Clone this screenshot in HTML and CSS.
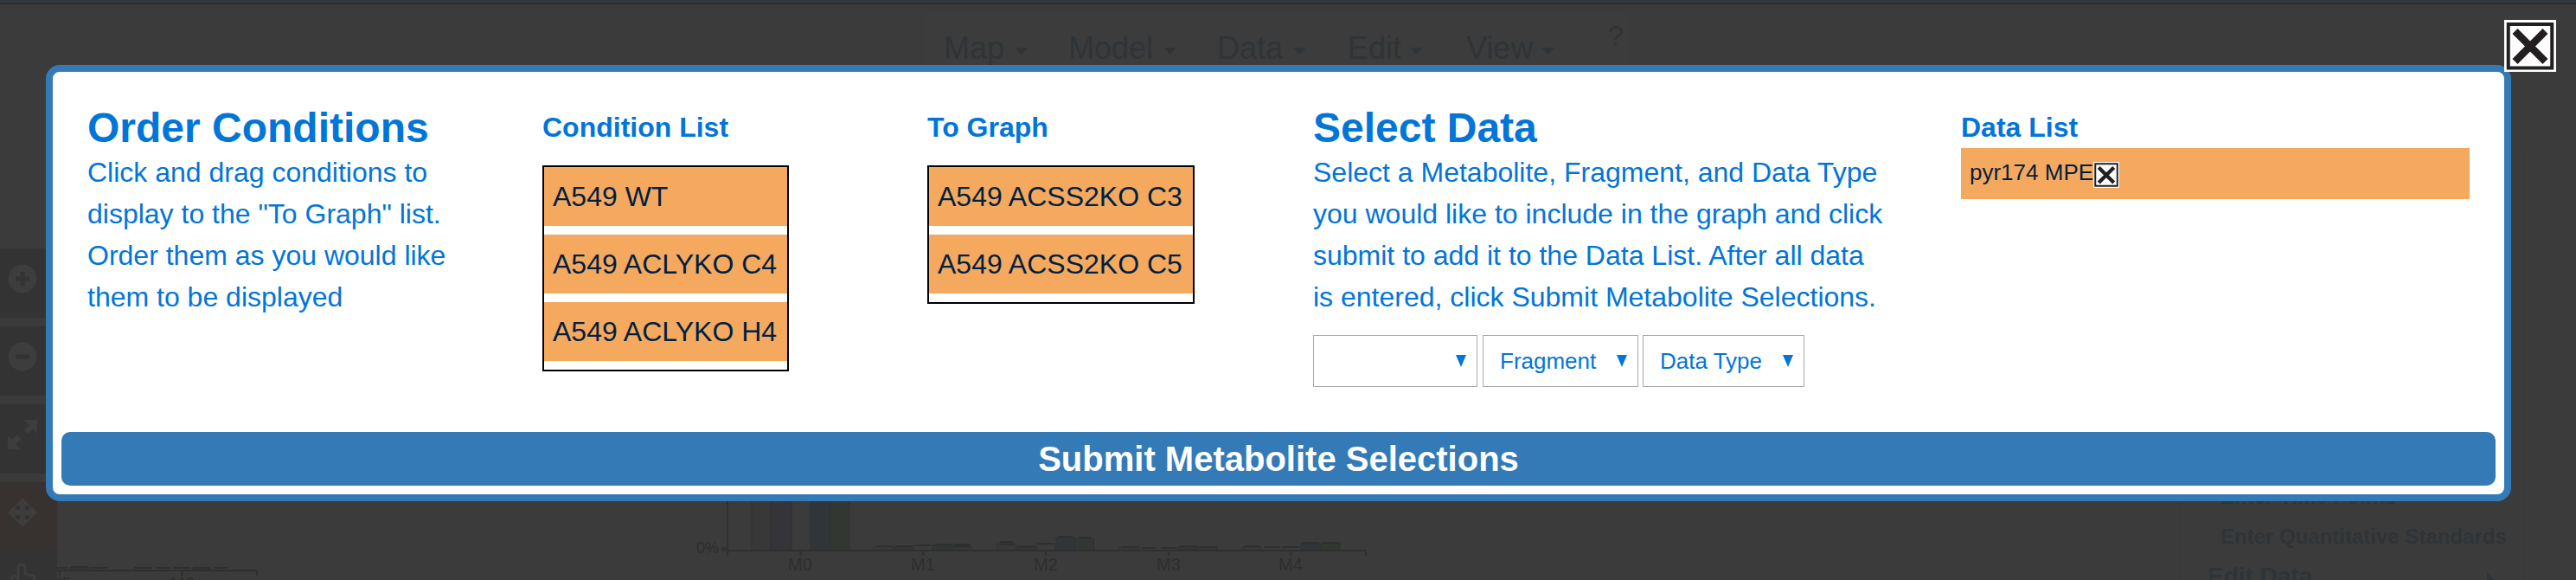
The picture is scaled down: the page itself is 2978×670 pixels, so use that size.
FILE: index.html
```
<!DOCTYPE html>
<html lang="en">
<head>
<meta charset="utf-8">
<title>Metabolite Selections</title>
<link rel="stylesheet" href="styles.css">
</head>
<body>
<div class="page">
  <svg class="backdrop" width="2978" height="670" viewBox="0 0 2978 670">
    <rect class="topbar" width="2978" height="4"/>
    <rect class="topline" y="4" width="2978" height="1"/>
    <rect class="nav" x="1070" y="16" width="814" height="70"/>
    <g class="menu">
      <text x="1091" y="68">Map</text><path d="M1173 55h15l-7.500 8z"/>
      <text x="1235" y="68">Model</text><path d="M1345 55h15l-7.500 8z"/>
      <text x="1407" y="68">Data</text><path d="M1495 55h15l-7.500 8z"/>
      <text x="1558" y="68">Edit</text><path d="M1630 55h15l-7.500 8z"/>
      <text x="1695" y="68">View</text><path d="M1782 55h15l-7.500 8z"/>
      <text class="help" x="1859" y="52">?</text>
    </g>
    <g class="tools">
      <rect y="287" width="66" height="80"/>
      <rect y="377" width="66" height="80"/>
      <rect y="467" width="66" height="80"/>
      <rect class="active" y="557" width="66" height="77"/>
      <rect y="634" width="66" height="36"/>
    </g>
    <g class="glyphs">
      <circle cx="26" cy="322" r="16.500"/><circle cx="26" cy="412" r="16.500"/>
      <path d="M27 485h16v16l-5-5-6 5.500-4.500-4.500 6-6zM9 519v-16l4.500 5 6-6 5 5-6 6 5 6z"/>
      <path d="M26 575l17 17-17 17-17-17z"/>
      <path class="hand" d="M21 672v-16q0-4 4-4t4 4v7l9 2q2 1 2 4l-1 4M21 668q-5-5-8 0l3 5"/>
    </g>
    <path class="glyph-cuts" d="M23.500 314h5v5.500h5.500v5h-5.500v5.500h-5v-5.500H18v-5h5.500zM18 409.500h16v5H18z"/>
    <path class="move-cuts" d="M18 584h5v5h-5zM29 584h5v5h-5zM18 595h5v5h-5zM29 595h5v5h-5z"/>
    <g class="chart">
      <g class="bars">
        <rect class="grey" x="869" y="570" width="22" height="66"/><rect class="navy" x="891" y="570" width="24" height="66"/>
        <rect class="blue" x="937" y="570" width="23" height="66"/><rect class="green" x="960" y="570" width="22" height="66"/>
        <rect class="grey" x="1010" y="631" width="23" height="5"/><rect class="navy" x="1033" y="631" width="23" height="5"/><rect class="blank" x="1056" y="630" width="22" height="6"/>
        <rect class="blue" x="1079" y="629" width="22" height="7"/><rect class="green" x="1101" y="630" width="22" height="6"/>
        <rect class="grey" x="1153" y="628" width="22" height="8"/><rect class="navy" x="1175" y="632" width="23" height="4"/><rect class="blank" x="1198" y="628" width="22" height="8"/>
        <rect class="blue" x="1221" y="621" width="22" height="15"/><rect class="green" x="1243" y="622" width="22" height="14"/>
        <rect class="grey" x="1294" y="632" width="23" height="4"/><rect class="blue" x="1362" y="631" width="23" height="5"/><rect class="green" x="1385" y="632" width="22" height="4"/>
        <rect class="grey" x="1436" y="632" width="22" height="4"/><rect class="blue" x="1504" y="628" width="23" height="8"/><rect class="green" x="1527" y="628" width="22" height="8"/>
      </g>
      <path class="axis" d="M841 570v72M834 633.500h7M834 636h745v6M925.500 636v6M1067.500 636v6M1209 636v6M1351 636v6M1492.500 636v6"/>
      <path class="caps" d="M1014 631h16M1037 631h16M1058 630h18M1080 629h19M1103 629h18M1103 631h18M1156 626h16M1156 629h16M1177 631h19M1200 628h18M1223 620h17M1246 621h16M1297 632h18M1320 633h16M1342 633h18M1364 631h19M1387 632h19M1438 631h18M1461 632h19M1482 632h20M1506 627h19M1529 627h19"/>
      <text x="805" y="639" class="pct">0%</text>
      <text x="911" y="659">M0</text><text x="1053" y="659">M1</text><text x="1195" y="659">M2</text><text x="1337" y="659">M3</text><text x="1478" y="659">M4</text>
      <rect class="blue" x="80" y="655" width="24" height="4"/><rect class="green" x="222" y="656" width="23" height="3"/>
      <path class="axis" d="M66 659h231v6M69 659v6M210.500 659v6"/>
      <path class="caps" d="M66 656h12M82 655h20M105 656h20M155 656h21M180 656h16M200 656h20M223 656h20M248 656h16"/>
      <text x="66" y="681">I5</text><text x="197" y="681">M6</text>
    </g>
    <path class="panel-line" d="M2519.500 570v100M2917.500 174v496M2917 288.500h61"/>
    <g class="side">
      <text x="2567" y="582">Enter Time Points</text>
      <text x="2567" y="628">Enter Quantitative Standards</text>
      <text class="edit" x="2552" y="675">Edit Data</text>
      <path d="M2875 661l9 9h-9z"/>
    </g>
  </svg>

  <div class="modal">
    <div class="content">
      <section class="order">
        <h1>Order Conditions</h1>
        <p>Click and drag conditions to<br>display to the "To Graph" list.<br>Order them as you would like<br>them to be displayed</p>
      </section>
      <section class="conditions">
        <h2>Condition List</h2>
        <ul class="list">
          <li>A549 WT</li>
          <li>A549 ACLYKO C4</li>
          <li>A549 ACLYKO H4</li>
        </ul>
      </section>
      <section class="graph">
        <h2>To Graph</h2>
        <ul class="list wide">
          <li>A549 ACSS2KO C3</li>
          <li>A549 ACSS2KO C5</li>
        </ul>
      </section>
      <section class="select">
        <h1>Select Data</h1>
        <p>Select a Metabolite, Fragment, and Data Type<br>you would like to include in the graph and click<br>submit to add it to the Data List. After all data<br>is entered, click Submit Metabolite Selections.</p>
        <div class="dropdowns">
          <div class="dropdown metabolite"><span></span><i class="arrow"></i></div>
          <div class="dropdown fragment"><span>Fragment</span><i class="arrow"></i></div>
          <div class="dropdown datatype"><span>Data Type</span><i class="arrow"></i></div>
        </div>
      </section>
      <section class="data">
        <h2>Data List</h2>
        <div class="entry"><span>pyr174 MPE</span>
          <svg width="30" height="30" viewBox="0 0 60 60"><rect width="60" height="60" fill="#fff"/><rect x="4.500" y="4.500" width="51" height="51" fill="none" stroke="#231f20" stroke-width="4"/><path d="M12.500 13l35 35M47.500 13l-35 35" stroke="#231f20" stroke-width="8.500"/></svg>
        </div>
      </section>
    </div>
    <button class="submit">Submit Metabolite Selections</button>
    <svg class="close" width="60" height="60" viewBox="0 0 60 60"><rect width="60" height="60" fill="#fff"/><rect x="4.750" y="5" width="50.500" height="50.500" fill="none" stroke="#231f20" stroke-width="4"/><path d="M12.500 13l35 35M47.500 13l-35 35" stroke="#231f20" stroke-width="8.500"/></svg>
  </div>
</div>
</body>
</html>
```
FILE: styles.css
```
* { box-sizing: border-box; }
body { margin: 0; font-family: "Liberation Sans", Arial, sans-serif; }
.page { position: relative; width: 2978px; height: 670px; overflow: hidden; background: #3b3b3b; padding: 75px 75px 0 53px; }

/* dimmed page behind the dialog */
.backdrop { position: absolute; left: 0; top: 0; }
.topbar { fill: #30363a; }
.topline { fill: #262626; }
.nav { fill: #3c3c3c; }
.menu { fill: #2f3438; font-size: 36px; }
.help { font-size: 32px; }
.tools rect { fill: #323332; }
.tools .active { fill: #373130; }
.glyphs { fill: #3d3d3d; }
.glyphs .hand { fill: none; stroke: #3d3d3d; stroke-width: 3; }
.glyph-cuts { fill: #323332; }
.move-cuts { fill: #373130; }
.chart { fill: #2e2e2e; font-size: 20px; }
.pct { font-size: 18px; }
.bars rect { stroke: #313131; stroke-width: 1; }
.chart .blank { fill: #3b3b3b; }
.chart .grey { fill: #383838; }
.chart .navy { fill: #343439; }
.chart .blue { fill: #303539; }
.chart .green { fill: #323831; }
.chart .axis { fill: none; stroke: #2f2f2f; stroke-width: 2; }
.chart .caps { fill: none; stroke: #2f2f2f; stroke-width: 2; }
.panel-line { fill: none; stroke: #383838; }
.side { fill: #2f3438; font-size: 24px; font-weight: bold; }
.edit { font-size: 28px; }

/* dialog */
.modal { position: relative; width: 2850px; height: 504px; border: 8px solid #337ab7; border-radius: 16px; background: #fff; padding: 10px; display: flex; flex-direction: column; }
.content { flex: 1; display: grid; grid-template-columns: 526px 445px 446px 749px 588px; padding-left: 30px; color: #0275d8; }
h1 { margin: 26px 0 0; font-size: 48px; line-height: 58px; height: 56px; }
h2 { margin: 35px 0 0; font-size: 32px; line-height: 38px; height: 38px; white-space: nowrap; }
p { margin: 0; font-size: 32px; line-height: 48px; white-space: nowrap; }
.list { list-style: none; margin: 25px 0 0; padding: 0; width: 285px; border: 2px solid #000; }
.wide { width: 309px; }
.list li { height: 68px; margin-bottom: 10px; padding: 0 10px; font-size: 32px; line-height: 68px; color: #011f3f; background: #f5a95f; white-space: nowrap; }
.dropdowns { display: flex; margin-top: 20px; }
.dropdown { height: 60px; border: 1px solid #a9a9a9; display: flex; align-items: center; justify-content: space-between; padding: 0 12px 0 19px; font-size: 26px; }
.metabolite { width: 190px; margin-right: 6px; }
.fragment { width: 180px; margin-right: 5px; }
.datatype { width: 187px; }
.arrow { width: 12px; height: 14px; background: #0275d8; clip-path: polygon(0 0, 100% 0, 50% 100%); }
.entry { height: 59px; margin-top: 5px; padding-left: 10px; display: flex; align-items: center; font-size: 26px; color: #011f3f; background: #f5a95f; }
.entry span { position: relative; top: -1px; }
.entry svg { position: relative; top: 1px; }
.submit { height: 62px; border: 0; border-radius: 10px; padding: 0; background: #337ab7; color: #fff; font: bold 40px "Liberation Sans", Arial, sans-serif; }
.close { position: absolute; left: 2834px; top: -60px; }
```
